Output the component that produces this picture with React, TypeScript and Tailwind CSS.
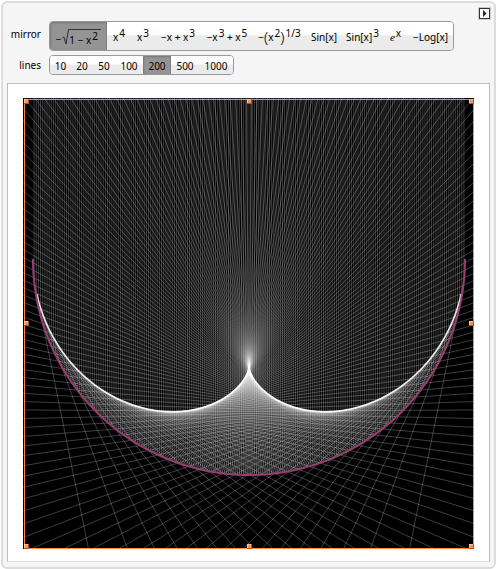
import { useMemo, useState } from "react";
import type { ReactNode } from "react";

type Mirror = {
  name: string;
  label: ReactNode;
  width: string;
  f: (x: number) => number;
};

function Sup({ children }: { children: ReactNode }) {
  return <span className="relative bottom-1 ml-px">{children}</span>;
}

function Root() {
  return (
    <span className="flex items-end pt-px">
      <span className="mr-px">−</span>
      <svg viewBox="0 0 7 16" className="h-4 w-[7px]" fill="none" stroke="#222" aria-hidden="true">
        <path d="M0.5 9 L2 8 L4 15 L6.5 0.5 H7" strokeWidth="0.9" />
      </svg>
      <span className="h-4 w-8 border-t border-[#333] pt-1 text-left leading-3">
        1 − x<Sup>2</Sup>
      </span>
    </span>
  );
}

const mirrors: Mirror[] = [
  { name: "circle", label: <Root />, width: "w-[57px]", f: (x) => -Math.sqrt(Math.max(0, 1 - x * x)) },
  { name: "x4", label: <>x<Sup>4</Sup></>, width: "w-6", f: (x) => x ** 4 },
  { name: "x3", label: <>x<Sup>3</Sup></>, width: "w-6", f: (x) => x ** 3 },
  { name: "-x+x3", label: <>−x + x<Sup>3</Sup></>, width: "w-[46px]", f: (x) => -x + x ** 3 },
  { name: "-x3+x5", label: <>−x<Sup>3</Sup> + x<Sup>5</Sup></>, width: "w-[52px]", f: (x) => -(x ** 3) + x ** 5 },
  {
    name: "-(x2)^1/3",
    label: (
      <>
        −<span className="text-[15px] font-light">(</span>x<Sup>2</Sup>
        <span className="text-[15px] font-light">)</span>
        <Sup>1/3</Sup>
      </>
    ),
    width: "w-[53px]",
    f: (x) => -Math.cbrt(x * x),
  },
  { name: "sin", label: "Sin[x]", width: "w-9", f: Math.sin },
  { name: "sin3", label: <>Sin[x]<Sup>3</Sup></>, width: "w-[41px]", f: (x) => Math.sin(x) ** 3 },
  {
    name: "exp",
    label: (
      <>
        <span className="font-['Liberation_Serif',serif] text-[11px] italic">e</span>
        <Sup>x</Sup>
      </>
    ),
    width: "w-[25px]",
    f: Math.exp,
  },
  { name: "-log", label: "−Log[x]", width: "w-[45px]", f: (x) => (x > 0 ? -Math.log(x) : NaN) },
];

const counts = [
  { value: 10, width: "w-[21px]" },
  { value: 20, width: "w-[22px]" },
  { value: 50, width: "w-[22px]" },
  { value: 100, width: "w-7" },
  { value: 200, width: "w-7" },
  { value: 500, width: "w-7" },
  { value: 1000, width: "w-[34px]" },
];

const SIZE = 451;
const CX = 226;
const CY = 161;
const R = 216;

const px = (x: number) => CX + R * x;
const py = (y: number) => CY - R * y;

function rays(f: (x: number) => number, n: number) {
  const out: string[] = [];
  const h = 1e-6;
  for (let i = 0; i < n; i++) {
    const x = -1 + (2 * i + 1) / n;
    const y = f(x);
    if (!Number.isFinite(y)) continue;
    const m = (f(x + h) - f(x - h)) / (2 * h);
    const dx = (-2 * m) / (1 + m * m);
    const dy = (1 - m * m) / (1 + m * m);
    out.push(`${px(x)},-5 ${px(x)},${py(y)} ${px(x + dx * 4)},${py(y + dy * 4)}`);
  }
  return out;
}

function curve(f: (x: number) => number) {
  const out: string[] = [];
  for (let i = 0; i <= 720; i++) {
    const x = -Math.cos((Math.PI * i) / 720);
    const y = f(x);
    if (Number.isFinite(y)) out.push(`${px(x)},${py(y)}`);
  }
  return out.join(" ");
}

// Envelope of the reflected rays; each ray touches it at distance 1 / (2 f'').
function caustic(f: (x: number) => number) {
  let d = "";
  let pen = "M";
  const h = 1e-4;
  for (let i = 0; i <= 400; i++) {
    const x = -0.994 * Math.cos((Math.PI * i) / 400);
    const y = f(x);
    const m = (f(x + h) - f(x - h)) / (2 * h);
    const m2 = (f(x + h) - 2 * y + f(x - h)) / (h * h);
    const s = 1 / (2 * m2);
    if (!Number.isFinite(s) || s <= 0 || s > 4) {
      pen = "M";
      continue;
    }
    d += `${pen}${px(x - 2 * m * s)} ${py(y + (1 - m * m) * s)}`;
    pen = "L";
  }
  return d;
}

const handles = [
  [1, 1], [224, 1], [446, 1],
  [1, 223], [446, 223],
  [1, 446], [224, 446], [446, 446],
];

function Plot({ f, n }: { f: (x: number) => number; n: number }) {
  const lines = useMemo(() => rays(f, n), [f, n]);
  const path = useMemo(() => curve(f), [f]);
  const envelope = useMemo(() => caustic(f), [f]);
  return (
    <svg viewBox={`0 0 ${SIZE} ${SIZE}`} className="block w-full bg-black" role="img" aria-label="Reflected rays">
      <g fill="none" stroke="#fff" strokeOpacity="0.24" strokeWidth="1" strokeLinejoin="bevel">
        {lines.map((p, i) => (
          <polyline key={i} points={p} />
        ))}
      </g>
      <path d={envelope} fill="none" stroke="#fff" strokeWidth="1.6" strokeOpacity={n >= 200 ? 0.85 : 0} />
      <polyline points={path} fill="none" stroke="#993d71" strokeWidth="2" />
      <rect x="1.5" y="1.5" width="449" height="449" fill="none" stroke="#ff8742" />
      {handles.map(([x, y]) => (
        <g key={`${x}-${y}`}>
          <rect x={x} y={y} width="5" height="5" fill="#a8572b" />
          <rect x={x} y={y} width="4" height="4" fill="#ffc09a" />
          <rect x={x + 1} y={y + 1} width="3" height="3" fill="#ff8f50" />
        </g>
      ))}
    </svg>
  );
}

function Setter({
  on,
  width,
  onClick,
  children,
}: {
  on: boolean;
  width: string;
  onClick: () => void;
  children: ReactNode;
}) {
  return (
    <button
      type="button"
      aria-pressed={on}
      onClick={onClick}
      className={`${width} flex h-full shrink-0 items-center justify-center whitespace-pre ${
        on
          ? "bg-[#949494] shadow-[inset_1px_1px_2px_#777,inset_-1px_0_1px_#808080]"
          : "bg-linear-to-b from-white from-45% to-[#ebebeb] to-50%"
      }`}
    >
      <span className="flex items-center pt-px">{children}</span>
    </button>
  );
}

export default function App() {
  const [mirror, setMirror] = useState("circle");
  const [count, setCount] = useState(200);
  const current = mirrors.find((m) => m.name === mirror) ?? mirrors[0];

  return (
    <div className="bg-white p-px font-['Noto_Sans','Open_Sans',sans-serif] text-[10px] leading-3 text-black">
      <main className="rounded-md border-2 border-[#dcdcdc] bg-[#f5f5f5] px-1 pb-[5px]">
        <header className="flex h-[18px] items-start justify-end pt-1">
          <button
            type="button"
            aria-label="Options"
            className="mt-px flex size-[11px] items-center justify-center border border-[#333] bg-[#f8f8f8] shadow-[0_0_0_1px_#ccc]"
          >
            <svg viewBox="0 0 5 7" className="h-[7px] w-[5px]" aria-hidden="true">
              <path d="M1 0 L4.5 3.5 L1 7 Z" fill="#222" />
            </svg>
          </button>
        </header>

        <div className="grid grid-cols-[34px_1fr] items-center gap-x-2 gap-y-1">
          <span id="mirror-label" className="pb-1 text-right">mirror</span>
          <div
            role="group"
            aria-labelledby="mirror-label"
            className="flex h-[30px] w-fit overflow-hidden rounded-[4px] border border-[#999]"
          >
            {mirrors.map((m) => (
              <Setter key={m.name} on={m.name === mirror} width={m.width} onClick={() => setMirror(m.name)}>
                {m.label}
              </Setter>
            ))}
          </div>
          <span id="lines-label" className="text-right">lines</span>
          <div
            role="group"
            aria-labelledby="lines-label"
            className="flex h-5 w-fit overflow-hidden rounded-[4px] border border-[#999]"
          >
            {counts.map((c) => (
              <Setter key={c.value} on={c.value === count} width={c.width} onClick={() => setCount(c.value)}>
                {c.value}
              </Setter>
            ))}
          </div>
        </div>

        <section className="mt-2 border border-[#bdbdbd] border-b-[#dedede] bg-white px-[15px] pt-[14px] pb-3">
          <Plot f={current.f} n={count} />
        </section>
      </main>
    </div>
  );
}
